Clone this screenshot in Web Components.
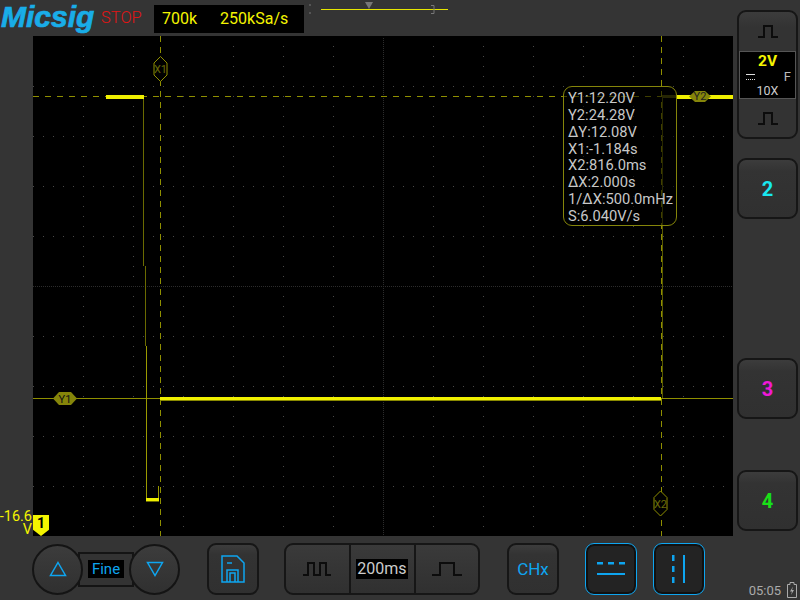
<!DOCTYPE html>
<html>
<head>
<meta charset="utf-8">
<style>
html,body{margin:0;padding:0;background:#343434;}
body{width:800px;height:600px;overflow:hidden;font-family:Roboto,"Liberation Sans",sans-serif;}
</style>
</head>
<body>
<scope-app></scope-app>
<script>
const BLUE = '#0ea5f0';
const wave = (w, d) => `<svg width="${w}" height="16" viewBox="0 0 ${w} 16" fill="none" stroke="#0c0c0c" stroke-width="2"><path d="${d}"/></svg>`;
const wideWave = wave(30, 'M0 14H8V2H22V14H30');
const narrowWave = wave(30, 'M1 14H6V2H12V14H18V2H24V14H29');

// plain button with a dark rim, slotted icon or label
class ScopeButton extends HTMLElement {
    constructor() {
        super();
        this.attachShadow({ mode: 'open' }).innerHTML = `
            <style>
                :host{display:flex;align-items:center;justify-content:center;box-sizing:border-box;width:52px;height:52px;
                    border:2px solid #161616;border-radius:9px;background:linear-gradient(#3c3c3c,#333 20%,#303030);
                    font:bold 20px Roboto,sans-serif;flex:none;}
                :host([active]){border:1.5px solid ${BLUE};background:#232323;box-shadow:inset 0 0 0 2px #111;}
                :host([wide]){width:61px;height:61px;}
            </style><slot></slot>`;
    }
}
customElements.define('scope-button', ScopeButton);

class TopBar extends HTMLElement {
    constructor() {
        super();
        this.attachShadow({ mode: 'open' }).innerHTML = `
            <style>
                :host{display:flex;align-items:flex-start;height:36px;grid-column:1 / -1;position:relative;}
                .logo{font:italic bold 30px/34px "Liberation Sans",sans-serif;color:#19ade8;-webkit-text-stroke:.7px #19ade8;width:101px;padding-left:1px;box-sizing:border-box;white-space:nowrap;}
                .stop{font:16.5px/36px Roboto,sans-serif;font-weight:300;color:#e01414;width:53px;}
                .rate{display:flex;box-sizing:border-box;width:150px;height:28px;margin-top:5px;background:#000;color:#f4f400;
                    font:16px/28px Roboto,sans-serif;padding-left:8px;gap:23px;}
                svg{margin-left:5px;}
            </style>
            <div class="logo">Micsig</div>
            <div class="stop">STOP</div>
            <div class="rate"><span>700k</span><span>250kSa/s</span></div>
            <svg width="144" height="18" viewBox="0 0 144 18">
                <path d="M0 5H2M0 13H2" stroke="#777" />
                <path d="M12 9.5H139" stroke="#e6e600" />
                <path d="M56 2H64L60 9Z" fill="#777"/>
                <path d="M122 5.5H125V13.5H122" stroke="#777" fill="none"/>
            </svg>`;
    }
}
customElements.define('top-bar', TopBar);

// the graticule, cursors and trace; places on this canvas are the content
class ScopeGrid extends HTMLElement {
    constructor() {
        super();
        let dots = '';
        for (let x = 50; x < 700; x += 50) for (let y = 10; y < 500; y += 10) dots += `M${x} ${y}h1`;
        for (let y = 50; y < 500; y += 50) for (let x = 0; x < 700; x += 10) dots += `M${x} ${y}h1`;
        let mid = '';
        for (let y = 2; y < 500; y += 2) mid += `M350 ${y}h1`;
        for (let x = 0; x < 700; x += 2) mid += `M${x} 250h1`;
        const olive = '#8f8f00';
        this.attachShadow({ mode: 'open' }).innerHTML = `
            <style>
                :host{display:block;position:relative;width:700px;height:500px;background:#000;}
                svg{position:absolute;left:0;top:0;}
                text{font-family:Roboto,sans-serif;font-size:11px;text-anchor:middle;}
                .box{position:absolute;left:530px;top:50px;width:114px;height:140px;box-sizing:border-box;border:1px solid #85850a;border-radius:9px;
                    padding:3px 0 0 4px;color:#c8c8c8;font:14.7px/16.85px Roboto,sans-serif;white-space:nowrap;background:rgba(0,0,0,.55);}
                .tag{position:absolute;left:0;bottom:0;width:16px;height:21px;background:#f4f400;color:#000;font:bold 14px/17px Roboto,sans-serif;text-align:center;
                    clip-path:polygon(0 0,100% 0,100% 70%,50% 100%,0 70%);}
            </style>
            <svg width="700" height="500" shape-rendering="crispEdges">
                <path d="${dots}" stroke="#4a4a4a" fill="none"/>
                <path d="${mid}" stroke="#2c2c2c" fill="none"/>
                <path d="M0 60.5H700" stroke="${olive}" stroke-dasharray="6 6"/>
                <path d="M0 362.5H700" stroke="${olive}"/>
                <path d="M127.5 0V500M628 0V500" stroke="${olive}" stroke-dasharray="6 5"/>
                <path d="M110.5 62V230M112 230V310" stroke="#6a6a00" fill="none"/>
                <path d="M113.5 310V462M125.5 450V462" stroke="#9a9a00" fill="none"/>
                <path d="M629.5 62V362" stroke="#5a5a00" fill="none"/>
                <path d="M629 60H644" stroke="#55550a" stroke-width="3"/>
                <rect x="73" y="58.5" width="38" height="4.5" fill="#f0f000"/>
                <rect x="644" y="59" width="56" height="4" fill="#f0f000"/>
                <rect x="127" y="361" width="501" height="3" fill="#f0f000"/>
                <rect x="127" y="364" width="501" height="1" fill="#8a8a00"/>
                <rect x="113" y="462" width="13" height="3" fill="#f0f000"/>
                <rect x="113" y="465" width="13" height="1" fill="#6a6a00"/>
            </svg>
            <svg width="700" height="500">
                <path d="M20 362.5L26 356H38L44 362.5L38 369H26Z" fill="#85850a"/>
                <text x="32" y="366.5" fill="#111">Y1</text>
                <path d="M656 60.5L662 55H672L678 60.5L672 66H662Z" fill="#85850a"/>
                <text x="667" y="64" fill="#222" font-size="9">Y2</text>
                <path d="M127.5 20.5L134 27V39L127.5 45.5L121 39V27Z" fill="#000" stroke="${olive}"/>
                <text x="127.5" y="37" fill="#6a6a08">X1</text>
                <path d="M627.5 455L634 461.5V473.5L627.5 480L621 473.5V461.5Z" fill="#000" stroke="${olive}"/>
                <text x="627.5" y="471.5" fill="#6a6a08">X2</text>
            </svg>
            <div class="box"><slot></slot></div>
            <div class="tag">1</div>`;
    }
}
customElements.define('scope-grid', ScopeGrid);

class SideColumn extends HTMLElement {
    constructor() {
        super();
        this.attachShadow({ mode: 'open' }).innerHTML = `
            <style>
                :host{display:block;padding:10px 0 0 4px;grid-row:1 / span 2;grid-column:3;}
                .group{box-sizing:border-box;width:61px;height:129px;border:2px solid #161616;border-radius:9px;display:flex;flex-direction:column;
                    background:linear-gradient(#3c3c3c,#333 12%);}
                .arrow{flex:1;display:flex;align-items:center;justify-content:center;}
                .readout{height:48px;background:#000;border:1px solid #555;box-sizing:border-box;color:#ddd;position:relative;text-align:center;font:13px/15px Roboto,sans-serif;}
                .volt{color:#f4f400;font:bold 15.5px/17px Roboto,sans-serif;padding-top:1px;}
                .row{display:flex;justify-content:space-between;align-items:center;padding:0 4px 0 6px;height:14px;}
                .dc{width:9px;height:4px;border-top:1px solid #ddd;border-bottom:1px dotted #ddd;}
                .f{font-size:13px;color:#bbb;}
                .x{line-height:13px;color:#ccc;font-size:12.5px;}
                .stack{display:flex;flex-direction:column;}
                .two{margin-top:19px;color:#18e8f0;}
                .three{margin-top:139px;color:#f018d8;}
                .four{margin-top:51px;color:#18e018;}
                svg{display:block;}
            </style>
            <div class="stack">
                <div class="group">
                    <div class="arrow">${wave(20, 'M0 14H6V3H14V14H20')}</div>
                    <div class="readout">
                        <div class="volt">2V</div>
                        <div class="row"><span class="dc"></span><span class="f">F</span></div>
                        <div class="x">10X</div>
                    </div>
                    <div class="arrow">${wave(20, 'M0 14H6V3H14V14H20')}</div>
                </div>
                <scope-button wide class="two">2</scope-button>
                <scope-button wide class="three">3</scope-button>
                <scope-button wide class="four">4</scope-button>
            </div>`;
    }
}
customElements.define('side-column', SideColumn);

class OffsetLabel extends HTMLElement {
    constructor() {
        super();
        this.attachShadow({ mode: 'open' }).innerHTML = `
            <style>
                :host{display:flex;align-items:flex-end;justify-content:flex-end;height:500px;color:#f4f400;
                    font:14.5px/13px Roboto,sans-serif;text-align:right;}
                div{padding:0 1px 0 0;width:33px;white-space:nowrap;}
            </style><div>-16.6<br>V</div>`;
    }
}
customElements.define('offset-label', OffsetLabel);

class BottomBar extends HTMLElement {
    constructor() {
        super();
        const glyph = 'stroke="' + BLUE + '" stroke-width="1.5" fill="none"';
        this.attachShadow({ mode: 'open' }).innerHTML = `
            <style>
                :host{display:flex;padding:7px 0 0 32px;grid-column:1 / span 3;height:64px;box-sizing:border-box;position:relative;}
                .nudge{display:flex;align-items:center;height:52px;width:148px;}
                .round{position:relative;z-index:1;flex:none;box-sizing:border-box;width:51px;height:51px;border:2px solid #141414;border-radius:50%;
                    background:linear-gradient(#3c3c3c,#303030);display:flex;align-items:center;justify-content:center;}
                .pill{flex:none;height:35px;width:56px;margin:0 -5px;box-sizing:border-box;border:2px solid #141414;background:#333;display:flex;align-items:center;justify-content:center;}
                .fine{background:#000;color:${BLUE};font:15px/18px Roboto,sans-serif;width:36px;text-align:center;}
                .save{margin-left:27px;}
                .time{margin-left:25px;box-sizing:border-box;width:196px;height:52px;border:2px solid #161616;border-radius:9px;display:flex;background:linear-gradient(#3a3a3a,#303030);}
                .time>div{display:flex;align-items:center;justify-content:center;}
                .t1,.t3{flex:1;}
                .t2{width:63px;flex:none;border:solid #161616;border-width:0 2px;}
                .t2 span{background:#000;color:#ccc;font:16px/20px Roboto,sans-serif;padding:0 1px;}
                .chx{margin-left:27px;color:${BLUE};font:17px Roboto,sans-serif;}
                .cy{margin-left:26px;}
                .cx{margin-left:16px;}
                .clock{position:absolute;right:3px;bottom:2px;display:flex;align-items:flex-end;gap:6px;color:#aaa;font:13px/15px Roboto,sans-serif;}
                svg{display:block;}
            </style>
            <div class="nudge">
                <div class="round"><svg width="18" height="16" viewBox="0 0 18 16"><path d="M9 1.5L16.5 14.5H1.5Z" ${glyph}/></svg></div>
                <div class="pill"><span class="fine">Fine</span></div>
                <div class="round"><svg width="18" height="16" viewBox="0 0 18 16"><path d="M1.5 1.5H16.5L9 14.5Z" ${glyph}/></svg></div>
            </div>
            <scope-button class="save">
                <svg width="24" height="28" viewBox="0 0 24 28" ${glyph}>
                    <path d="M1 1H16L23 8V27H1Z"/><path d="M6 8H11"/><path d="M6 27V15H17V27"/><path d="M9 27V18H14V27"/>
                </svg>
            </scope-button>
            <div class="time">
                <div class="t1">${narrowWave}</div>
                <div class="t2"><span>200ms</span></div>
                <div class="t3">${wideWave}</div>
            </div>
            <scope-button class="chx">CHx</scope-button>
            <scope-button class="cy" active>
                <svg width="28" height="14" viewBox="0 0 28 14" fill="${BLUE}">
                    <rect x="0" y="0" width="6" height="2.5"/><rect x="11" y="0" width="6" height="2.5"/><rect x="22" y="0" width="6" height="2.5"/>
                    <rect x="0" y="11" width="28" height="2"/>
                </svg>
            </scope-button>
            <scope-button class="cx" active>
                <svg width="14" height="28" viewBox="0 0 14 28" fill="${BLUE}">
                    <rect x="0" y="0" width="2.5" height="6"/><rect x="0" y="11" width="2.5" height="6"/><rect x="0" y="22" width="2.5" height="6"/>
                    <rect x="11" y="0" width="2" height="28"/>
                </svg>
            </scope-button>
            <div class="clock"><span>05:05</span>
                <svg width="10" height="16" viewBox="0 0 10 16" fill="none" stroke="#aaa"><path d="M3 .5H7V2.5H9.5V15.5H.5V2.5H3Z"/><path d="M6 4.5L3 9.5H5L4 13L7 8H5Z" fill="#aaa" stroke="none"/></svg>
            </div>`;
    }
}
customElements.define('bottom-bar', BottomBar);

class ScopeApp extends HTMLElement {
    constructor() {
        super();
        this.attachShadow({ mode: 'open' }).innerHTML = `
            <style>
                :host{display:grid;grid-template-columns:33px 700px 67px;grid-template-rows:36px 500px 64px;width:800px;height:600px;}
                top-bar{grid-column:1 / span 2;}
            </style>
            <top-bar></top-bar>
            <side-column></side-column>
            <offset-label></offset-label>
            <scope-grid>
                <div>Y1:12.20V</div><div>Y2:24.28V</div><div>ΔY:12.08V</div><div>X1:-1.184s</div>
                <div>X2:816.0ms</div><div>ΔX:2.000s</div><div>1/ΔX:500.0mHz</div><div>S:6.040V/s</div>
            </scope-grid>
            <bottom-bar></bottom-bar>`;
    }
}
customElements.define('scope-app', ScopeApp);
</script>
</body>
</html>
